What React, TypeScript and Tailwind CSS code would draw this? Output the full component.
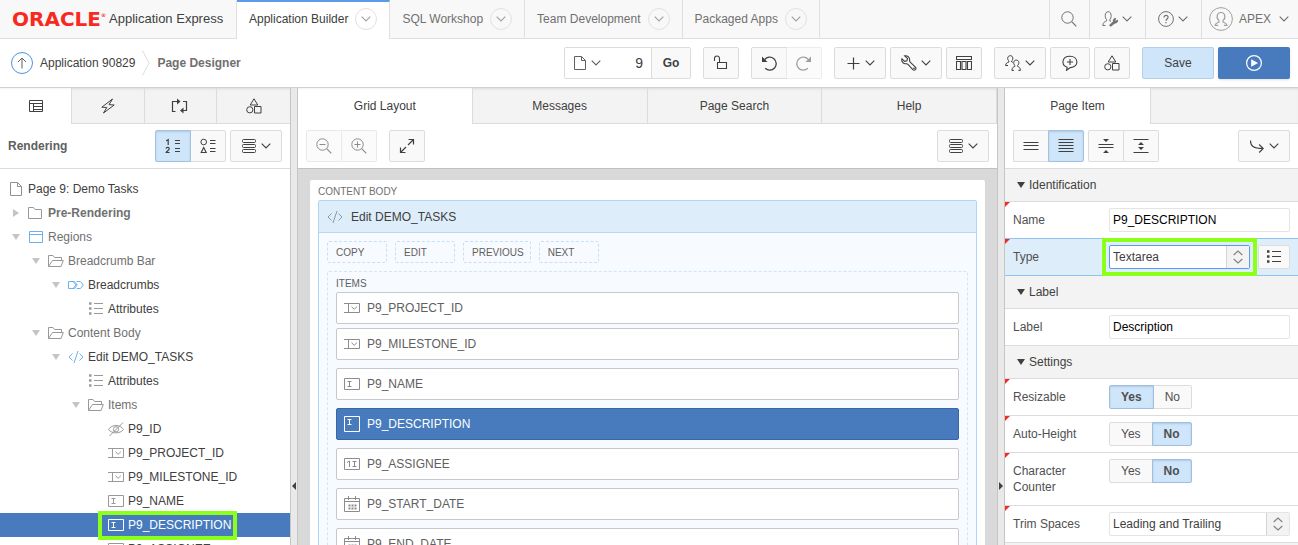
import React, { useState } from "react";

type Kids = { children?: React.ReactNode };

function Icon({ children, w = 16, h = 16, className = "" }: Kids & { w?: number; h?: number; className?: string }) {
  return (
    <svg
      width={w}
      height={h}
      viewBox={`0 0 ${w} ${h}`}
      fill="none"
      stroke="currentColor"
      strokeWidth="1"
      aria-hidden="true"
      className={`shrink-0 ${className}`}
    >
      {children}
    </svg>
  );
}

const Chevron = ({ className = "" }: { className?: string }) => (
  <Icon w={10} h={6} className={className}>
    <path d="M.7.7 5 5 9.3.7" strokeWidth="1.1" />
  </Icon>
);
const PageIcon = ({ className = "" }: { className?: string }) => (
  <Icon w={12} h={14} className={className}>
    <path d="M.5.5H7.5L11.5 4.5V13.5H.5ZM7.5.5V4.5H11.5" />
  </Icon>
);
const ShapesIcon = () => (
  <Icon>
    <path d="M8 .8 11.8 7H4.2ZM8.5 8.5h6.5v6.5h-6.5z" />
    <circle cx="3.8" cy="11.8" r="3.1" />
  </Icon>
);
const SearchIcon = ({ sign }: { sign?: "plus" | "minus" }) => (
  <Icon>
    <circle cx="6.5" cy="6.5" r="5.7" />
    <path d="M10.7 10.7 15.3 15.3" strokeWidth="1.2" />
    {sign && <path d="M3.5 6.5h6" />}
    {sign === "plus" && <path d="M6.5 3.5v6" />}
  </Icon>
);
const UserToolsIcon = () => (
  <Icon>
    <path d="M4.6 8.6C2.8 7.6 2.3.7 6.2.7s3.4 6.9 1.600 7.9v1.3l1.2.5M4.600 8.600v1.3C3 10.600 1 11.2.8 14.500h2.600" />
    <path
      d="M8.6 15.3 7.6 14.2 11.4 10.4C11 8.8 12 7.3 13.6 7.3L12.8 9.4 13.9 10.3 15.6 9.1C16 10.8 14.7 12.2 12.9 12Z"
      fill="currentColor"
    />
  </Icon>
);
const HelpIcon = () => (
  <Icon>
    <circle cx="8" cy="8" r="7.4" />
    <path d="M6 6.4C6 3.6 10.2 3.8 10.1 6.3 10 7.9 8 8 8 9.7M8 11v1.3" strokeWidth="1.2" />
  </Icon>
);
const AvatarIcon = () => (
  <Icon w={24} h={24}>
    <circle cx="12" cy="12" r="11.4" />
    <path
      d="M10 13.5C7.3 12 7.2 5.5 12 5.5s4.7 6.5 2 8v1.5c1.7.8 3.7.9 3.9 3.4h-3M10 13.5v1.5c-1.7.8-3.7.9-3.9 3.4h3"
      strokeWidth="1.2"
    />
  </Icon>
);
const LockIcon = () => (
  <Icon>
    <path d="M1.5 6V3.5a2.5 2.5 0 0 1 5 0V7.5M4.5 7.5h9v6h-9z" strokeWidth="1.1" />
  </Icon>
);
const UndoIcon = ({ className = "" }: { className?: string }) => (
  <Icon className={className}>
    <path d="M3.6 4.6A6.5 6.5 0 1 1 4.2 13.3" strokeWidth="1.3" />
    <path d="M1 1.5V7H6.5Z" fill="currentColor" stroke="none" />
  </Icon>
);
const PlusIcon = () => (
  <Icon>
    <path d="M8.5 2.5v12M2.5 8.5h12" strokeWidth="1.2" />
  </Icon>
);
const WrenchIcon = () => (
  <Icon>
    <path
      d="M3.6.9 6.5 3.4 5.9 5.7 3.6 6.4.9 3.8C.2 6.2 2.2 9.2 5.3 8.7 6 8.6 6.5 8.9 7 9.4L11.8 14.7C13.6 16.3 16 13.9 14.4 12.2L9.2 7.2C8.7 6.7 8.5 6.2 8.6 5.5 9 2.3 6.2.1 3.6.9Z"
      strokeWidth="1.1"
    />
    <circle cx="13" cy="13.3" r=".5" />
  </Icon>
);
const GridIcon = () => (
  <Icon>
    <path d="M.5 1.5h15v3H.5zM.5 6.5h4v8h-4zM6 6.5h4v8h-4zM11.5 6.5h4v8h-4z" strokeWidth="1.1" />
  </Icon>
);
const UsersIcon = () => (
  <Icon>
    <path d="M3.9 6C2.2 5 2 .7 5.3.7s3 4.3 1.3 5.3M3.9 6v1C2.3 7.6.7 8 .6 10.5h2.4M6.6 6v.8l1.2.5" />
    <path d="M9.9 10.4C8.2 9.4 8 5.1 11.3 5.1s3 4.3 1.3 5.3v1c1.6.6 2.6 1.3 2.8 4h-2M9.9 10.4v1c-1.6.6-2.9 1.300-3 4h2" />
  </Icon>
);
const CommentIcon = () => (
  <Icon>
    <path d="M5.2 12.2C-1 10.2-.6 1.3 8 1.3s9.6 10.9.3 11.3L4.5 15.3ZM8 4v6M5 7h6" strokeWidth="1.1" />
  </Icon>
);
const PlayIcon = () => (
  <Icon>
    <circle cx="8" cy="8" r="7.4" strokeWidth="1.2" />
    <path d="M5.2 4.2 12 8 5.2 11.8Z" fill="currentColor" stroke="none" />
  </Icon>
);
const RowsIcon = () => (
  <Icon>
    <rect x="1.5" y="1.5" width="13" height="3" rx="1" />
    <rect x="1.5" y="6.5" width="13" height="3" rx="1" />
    <rect x="1.5" y="11.5" width="13" height="3" rx="1" />
  </Icon>
);
const LayoutIcon = () => (
  <Icon>
    <path d="M1.5 2.5h13v11h-13zM1.5 5.5h13M5.5 5.5v8M5.5 8.500h9M5.5 11.5h9" />
  </Icon>
);
const BoltIcon = () => (
  <Icon>
    <path d="M12.5 1 1.800 9.200 6.800 9.500 3.500 15 14.200 7 9 6.600Z" />
  </Icon>
);
const ProcessIcon = () => (
  <Icon w={18}>
    <path d="M4.5 13.5h-3v-10h6M12 3.5h3.5v9h-4" strokeWidth="1.2" />
    <path d="M6 .5v6l3.5-3zM12.500 9.500v6l-3.500-3z" fill="currentColor" stroke="none" />
  </Icon>
);
const NumberedIcon = () => (
  <Icon>
    <path
      d="M1.2 3 3.2 1.6V7M1 10.6C1.3 9 4.4 9 4.2 10.8 4 12.2 1.8 13 1.2 14.5H4.600M10 2.500h5M10 5.500h5M10 10.500h5M10 13.500h5"
      strokeWidth="1.2"
    />
  </Icon>
);
const ShapeListIcon = () => (
  <Icon>
    <circle cx="3.7" cy="4" r="2.8" />
    <path d="M3.7 9.5 6.2 14.5H1.2ZM10 2.5h5.500M10 5.500h5.500M10 10.500h5.500M10 13.500h5.500" strokeWidth="1.1" />
  </Icon>
);
const ExpandIcon = () => (
  <Icon>
    <path d="M9.5 1.5h5v5M14.5 1.5 9 7M1.5 9.5v5h5M1.5 14.5 7 9" strokeWidth="1.2" />
  </Icon>
);
const LinesIcon = ({ many }: { many?: boolean }) => (
  <Icon>
    {many ? (
      <path d="M.5 1.5h15M.5 4.5h15M.5 7.5h15M.5 10.5h15M.5 13.5h15" strokeWidth="1.2" />
    ) : (
      <path d="M.5 4.5h15M.5 7.5h15M.5 11.5h15" />
    )}
  </Icon>
);
const CollapseIcon = () => (
  <Icon>
    <path d="M.5 6.5h15M.5 9.5h15" strokeWidth="1.1" />
    <path d="M5 1h6L8 4zM5 15h6L8 12z" fill="currentColor" stroke="none" />
  </Icon>
);
const ExpandAllIcon = () => (
  <Icon>
    <path d="M.5 1.5h15M.5 14.5h15" strokeWidth="1.1" />
    <path d="M5 7h6L8 4zM5 9h6L8 12z" fill="currentColor" stroke="none" />
  </Icon>
);
const GotoIcon = () => (
  <Icon>
    <path d="M1.5 2.5C1.5 8 4 10.5 14 10.5M10.2 6.5l4 4-4 4" strokeWidth="1.1" />
  </Icon>
);
const FolderIcon = () => (
  <Icon>
    <path d="M.5 13.5V2.5H5.5L7 4.5H13.5V13.5Z" />
  </Icon>
);
const FolderOpenIcon = () => (
  <Icon>
    <path d="M.5 13.5V2.5H5L6.5 4.5H13.5V7.5M.5 13.5H13L15.3 7.5H4.5L.5 13.5" />
  </Icon>
);
const RegionIcon = () => (
  <Icon className="text-[#6cb0ee]">
    <path d="M1.5 2.5h13v11h-13zM1.5 5.5h13" />
  </Icon>
);
const CrumbIcon = () => (
  <Icon className="text-[#6cb0ee]">
    <path d="M.5 4.5H6.5L9.2 8 6.5 11.5H.5ZM8.5 4.5H12.5L15.3 8 12.5 11.5H8.5M5.5 5 8 8 5.5 11" />
  </Icon>
);
const CodeIcon = ({ className = "" }: { className?: string }) => (
  <Icon className={className}>
    <path d="M4.5 4.5 1 8l3.5 3.5M11.5 4.5 15 8l-3.5 3.5M10 2 6 14" />
  </Icon>
);
const ListIcon = () => (
  <Icon>
    <path d="M6 2.5h9M6 7.5h9M6 12.5h9" />
    <path d="M1 1.2h2.5v2.5H1zM1 6.2h2.5v2.5H1zM1 11.2h2.5v2.5H1z" fill="currentColor" stroke="none" />
  </Icon>
);
const HiddenIcon = () => (
  <Icon>
    <path d="M.5 8.5C4 3.2 12 3.2 15.5 8.5 12 13 4 13 .5 8.5ZM1.5 15 15 1.5" />
    <circle cx="8" cy="8.3" r="2.6" />
  </Icon>
);
const SelectIcon = () => (
  <Icon>
    <path d="M0 3.5h15.5v9H0M4.5 3.5v9M7.5 6.7l2.7 2.6 2.7-2.6" />
  </Icon>
);
const TextIcon = () => (
  <Icon>
    <path d="M.5 2.5h15v11H.5zM3.5 5.5h4M3.5 10.5h4M5.5 5.5v5" />
  </Icon>
);
const TextareaIcon = () => (
  <Icon>
    <path d="M.5.5h15v15H.5zM3.5 3.5h4M3.5 8.5h4M5.5 3.5v5" />
  </Icon>
);
const NumberIcon = () => (
  <Icon>
    <path d="M.5 2.5h15v11H.5zM3 6.5 5.5 5V11M8.5 5.5h4M8.5 10.5h4M10.5 5.5v5" />
  </Icon>
);
const CalendarIcon = () => (
  <Icon>
    <path d="M.5 2.5h15v13H.5zM.5 5.5h15M4.5 0v4M11.5 0v4" />
    <path d="M4.5 9.5h8M4.5 12.5h8" strokeWidth="2" strokeDasharray="2 1" />
  </Icon>
);

const btn = "flex h-8 items-center justify-center gap-1 border border-[#dcdcdc] bg-[#f9f9f9] text-[#404040]";
const on = "flex h-8 items-center justify-center border border-[#a3c2e0] bg-[#cfe5fa] text-[#404040] shadow-[inset_0_1px_2px_#7fa6cc66]";

function MenuButton({ label, children }: Kids & { label: string }) {
  return (
    <button aria-label={label} className={`${btn} w-[52px] rounded-xs`}>
      {children}
      <Chevron />
    </button>
  );
}

function Header() {
  const tabs = ["Application Builder", "SQL Workshop", "Team Development", "Packaged Apps"];
  return (
    <header className="flex h-[39px] shrink-0 bg-[#f8f8f8]">
      <div className="flex w-[237px] shrink-0 items-center border-r border-b border-[#dfdfdf] pl-3">
        <span className="flex w-[97px] items-start font-['DejaVu_Sans'] text-[20px] leading-5 font-bold text-[#f8291e]">
          ORACLE<span className="text-[5px] leading-3">®</span>
        </span>
        <span className="text-[13px] whitespace-nowrap text-[#404040]">Application Express</span>
      </div>
      <nav className="flex">
        {tabs.map((t, i) => (
          <div
            key={t}
            className={
              i === 0
                ? "flex items-center gap-[7px] border-t-2 border-r border-t-[#5b9bea] border-r-[#dfdfdf] bg-white px-3 pb-[3px] text-[#404040]"
                : "flex items-center gap-[7px] border-r border-b border-[#dfdfdf] px-3 text-[#707070]"
            }
          >
            <a href="#" className="whitespace-nowrap">{t}</a>
            <button
              aria-label={`${t} menu`}
              className="flex size-[22px] items-center justify-center rounded-full border border-[#e2e2e2] text-[#a0a0a0]"
            >
              <Chevron />
            </button>
          </div>
        ))}
      </nav>
      <div className="flex flex-1 justify-end border-b border-[#dfdfdf] text-[#707070]">
        <button aria-label="Search" className="flex w-10 items-center justify-center border-l border-[#dfdfdf] pr-0.5">
          <SearchIcon />
        </button>
        <button aria-label="Administration" className="flex w-14 items-center justify-center gap-1 border-l border-[#dfdfdf] pr-0.5">
          <UserToolsIcon />
          <Chevron />
        </button>
        <button aria-label="Help" className="flex w-14 items-center justify-center gap-1 border-l border-[#dfdfdf] pr-0.5">
          <HelpIcon />
          <Chevron />
        </button>
        <button className="flex w-[97px] items-center border-l border-[#dfdfdf] pl-[7px]">
          <span className="flex text-[#a0a0a0]"><AvatarIcon /></span>
          <span className="mr-2 ml-1.5">APEX</span>
          <Chevron />
        </button>
      </div>
    </header>
  );
}

function Toolbar() {
  return (
    <div className="flex h-[49px] shrink-0 items-center border-b border-[#d0d0d0] bg-white pr-2 pl-[11px]">
      <a
        href="#"
        aria-label="Up"
        className="flex size-[22px] items-center justify-center rounded-full border border-[#4a94e6] text-[#606060]"
      >
        <Icon w={10} h={12}>
          <path d="M5 11.5V1M1 5 5 1 9 5" />
        </Icon>
      </a>
      <a href="#" className="ml-[7px] text-[#404040]">Application 90829</a>
      <Icon w={8} h={26} className="mx-[7px] text-[#dcdcdc]">
        <path d="M.5.5 7 13 .5 25.5" />
      </Icon>
      <h1 className="font-bold text-[#707070]">Page Designer</h1>
      <div className="ml-auto flex gap-3">
        <div className="flex h-8 rounded-xs border border-[#dcdcdc] text-[#404040]">
          <button aria-label="Recent pages" className="flex w-11 items-center gap-[5px] pl-[9px] text-[#606060]">
            <PageIcon />
            <Chevron />
          </button>
          <input
            aria-label="Page number"
            defaultValue="9"
            className="w-[42px] bg-white pr-2 text-right text-[14px] outline-none"
          />
          <button className="w-[39px] border-l border-[#dcdcdc] bg-[#f9f9f9] font-bold">Go</button>
        </div>
        <button aria-label="Lock" className={`${btn} w-9 rounded-xs`}><LockIcon /></button>
        <div className="flex">
          <button aria-label="Undo" className={`${btn} w-9 rounded-l-xs`}><UndoIcon /></button>
          <button aria-label="Redo" disabled className={`${btn} -ml-px w-9 rounded-r-xs border-l-0 opacity-50`}>
            <UndoIcon className="-scale-x-100" />
          </button>
        </div>
        <div className="flex gap-1">
          <MenuButton label="Create"><PlusIcon /></MenuButton>
          <MenuButton label="Utilities"><WrenchIcon /></MenuButton>
          <button aria-label="Component view" className={`${btn} w-9 rounded-xs`}><GridIcon /></button>
        </div>
        <div className="flex gap-1">
          <MenuButton label="Team"><UsersIcon /></MenuButton>
          <button aria-label="Comments" className={`${btn} w-10 rounded-xs`}><CommentIcon /></button>
          <button aria-label="Shared components" className={`${btn} w-9 rounded-xs`}><ShapesIcon /></button>
        </div>
        <div className="flex gap-1">
          <button className="h-8 w-[72px] rounded-xs border border-[#b3cfea] bg-[#cfe5fa] text-[#404040]">Save</button>
          <button
            aria-label="Save and run page"
            className="flex h-8 w-[72px] items-center justify-center rounded-xs bg-[#477bbd] text-white shadow-sm"
          >
            <PlayIcon />
          </button>
        </div>
      </div>
    </div>
  );
}

const idleTab = "border-b border-[#dcdcdc] bg-[#f3f3f3] shadow-[inset_0_3px_3px_-2px_#0000001a]";
const activeTab = "border-[#dcdcdc] bg-white shadow-[inset_0_3px_3px_-3px_#0000001a]";

type Node = {
  level: number;
  label: string;
  icon: React.ReactNode;
  tone?: string;
  open?: boolean;
  closed?: boolean;
  selected?: boolean;
};

const tree: Node[] = [
  { level: 1, label: "Pre-Rendering", icon: <FolderIcon />, tone: "font-bold text-[#707070]", closed: true },
  { level: 1, label: "Regions", icon: <RegionIcon />, tone: "text-[#707070]", open: true },
  { level: 2, label: "Breadcrumb Bar", icon: <FolderOpenIcon />, tone: "text-[#707070]", open: true },
  { level: 3, label: "Breadcrumbs", icon: <CrumbIcon />, open: true },
  { level: 4, label: "Attributes", icon: <ListIcon /> },
  { level: 2, label: "Content Body", icon: <FolderOpenIcon />, tone: "text-[#707070]", open: true },
  { level: 3, label: "Edit DEMO_TASKS", icon: <CodeIcon className="text-[#6cb0ee]" />, open: true },
  { level: 4, label: "Attributes", icon: <ListIcon /> },
  { level: 4, label: "Items", icon: <FolderOpenIcon />, tone: "text-[#707070]", open: true },
  { level: 5, label: "P9_ID", icon: <HiddenIcon /> },
  { level: 5, label: "P9_PROJECT_ID", icon: <SelectIcon /> },
  { level: 5, label: "P9_MILESTONE_ID", icon: <SelectIcon /> },
  { level: 5, label: "P9_NAME", icon: <TextIcon /> },
  { level: 5, label: "P9_DESCRIPTION", icon: <TextIcon />, selected: true },
  { level: 5, label: "P9_ASSIGNEE", icon: <NumberIcon /> },
];

const indent = ["", "pl-2", "pl-7", "pl-12", "pl-[68px]", "pl-[88px]"];

function TreePanel() {
  const tabs = [
    ["Rendering", <LayoutIcon />],
    ["Dynamic Actions", <BoltIcon />],
    ["Processing", <ProcessIcon />],
    ["Shared Components", <ShapesIcon />],
  ] as const;
  return (
    <aside className="flex w-[290px] shrink-0 flex-col overflow-hidden bg-white">
      <div className="grid h-9 shrink-0 grid-cols-[72px_1fr_1fr_1fr] text-[#404040]">
        {tabs.map(([label, icon], i) => (
          <button
            key={label}
            aria-label={label}
            className={`flex items-center justify-center border-r last:border-r-0 ${i === 0 ? activeTab : idleTab}`}
          >
            {icon}
          </button>
        ))}
      </div>
      <div className="flex h-[45px] shrink-0 items-center border-b border-[#dcdcdc] px-2">
        <h2 className="flex-1 font-bold text-[#606060]">Rendering</h2>
        <button aria-label="Order by processing" className={`${on} w-9 rounded-l-xs`}><NumberedIcon /></button>
        <button aria-label="Group by component" className={`${btn} mr-1 w-[35px] rounded-r-xs border-l-0`}>
          <ShapeListIcon />
        </button>
        <MenuButton label="Rendering menu"><RowsIcon /></MenuButton>
      </div>
      <ul className="pt-2 text-[#404040]">
        <li className="flex h-6 items-center pl-2.5">
          <PageIcon className="mr-1.5 text-[#909090]" />
          Page 9: Demo Tasks
        </li>
        {tree.map((n, i) => (
          <li
            key={i}
            className={`relative flex h-6 items-center whitespace-nowrap ${indent[n.level]} ${
              n.selected ? "bg-[#477bbd] text-white" : ""
            }`}
          >
            <span className="flex w-5 justify-start pl-1 text-[#c4c4c4]">
              {n.open && (
                <Icon w={8} h={6}><path d="M0 0h8L4 6z" fill="currentColor" stroke="none" /></Icon>
              )}
              {n.closed && (
                <Icon w={8} h={8}><path d="M1 0v8l6-4z" fill="currentColor" stroke="none" /></Icon>
              )}
            </span>
            <span className={`mr-1 flex ${n.selected ? "" : "text-[#999999]"}`}>{n.icon}</span>
            <span className={n.tone}>{n.label}</span>
            {n.selected && (
              <span className="pointer-events-none absolute -top-0.5 left-[98px] z-10 h-[29px] w-[139px] border-4 border-[#8cff1a]" />
            )}
          </li>
        ))}
      </ul>
    </aside>
  );
}

function Splitter({ side }: { side: "left" | "right" }) {
  return (
    <div className="flex w-2 shrink-0 justify-center border-x border-[#c6c6c6] bg-[#e9e9e9] pt-[394px] text-[#404040]">
      <Icon w={4} h={8}>
        <path d={side === "left" ? "M4 0v8L0 4z" : "M0 0v8l4-4z"} fill="currentColor" stroke="none" />
      </Icon>
    </div>
  );
}

function GridItem({ label, icon, selected }: { label: string; icon: React.ReactNode; selected?: boolean }) {
  return (
    <li
      className={`flex h-8 shrink-0 items-center gap-[7px] rounded-xs border pl-[7px] ${
        selected ? "border-[#3a67a0] bg-[#477bbd] text-white" : "border-[#c6cacd] bg-white text-[#606060]"
      }`}
    >
      <span className={`flex ${selected ? "" : "text-[#8c8c8c]"}`}>{icon}</span>
      {label}
    </li>
  );
}

function GridPanel() {
  return (
    <main className="flex min-w-0 flex-1 flex-col overflow-hidden bg-white">
      <div className="grid h-9 shrink-0 grid-cols-4 text-[#404040]">
        {["Grid Layout", "Messages", "Page Search", "Help"].map((t, i) => (
          <button key={t} className={`border-r ${i === 0 ? activeTab : idleTab}`}>
            {t}
          </button>
        ))}
      </div>
      <div className="flex h-[45px] shrink-0 items-center border-b border-[#c0c0c0] px-2">
        <button disabled aria-label="Zoom out" className={`${btn} w-9 rounded-l-xs opacity-60`}>
          <SearchIcon sign="minus" />
        </button>
        <button disabled aria-label="Zoom in" className={`${btn} mr-3 w-[35px] rounded-r-xs border-l-0 opacity-60`}>
          <SearchIcon sign="plus" />
        </button>
        <button aria-label="Expand" className={`${btn} mr-auto w-9 rounded-xs`}><ExpandIcon /></button>
        <MenuButton label="Layout menu"><RowsIcon /></MenuButton>
      </div>
      <div className="flex-1 overflow-hidden bg-[#d9d9d9] px-3 pt-[11px]">
        <section className="rounded-xs bg-white px-2 pb-2">
          <h2 className="h-5 pt-0.5 text-[10px] leading-5 text-[#707070]">CONTENT BODY</h2>
          <div className="rounded-xs border border-[#aed5f7] bg-[#f7fbff]">
            <h3 className="flex h-8 items-center gap-2 border-b border-[#b9d8f0] bg-[#deedfa] pl-2 text-[#404040]">
              <CodeIcon className="text-[#8c9aa5]" />
              Edit DEMO_TASKS
            </h3>
            <div className="px-2 pt-2 pb-2">
              <div className="mb-2 flex gap-2">
                {["COPY", "EDIT", "PREVIOUS", "NEXT"].map((b) => (
                  <div
                    key={b}
                    className="flex h-[22px] min-w-[60px] items-center rounded-xs border border-dashed border-[#c5e0f7] pt-0.5 pr-1.5 pl-2 text-[10px] text-[#606060]"
                  >
                    {b}
                  </div>
                ))}
              </div>
              <div className="rounded-xs border border-dashed border-[#cfe5f8] px-2 pb-2">
                <h4 className="h-5 pt-0.5 text-[10px] leading-5 text-[#606060]">ITEMS</h4>
                <ul className="flex flex-col gap-2">
                  <li>
                    <ul className="flex flex-col gap-1">
                      <GridItem label="P9_PROJECT_ID" icon={<SelectIcon />} />
                      <GridItem label="P9_MILESTONE_ID" icon={<SelectIcon />} />
                    </ul>
                  </li>
                  <GridItem label="P9_NAME" icon={<TextIcon />} />
                  <GridItem label="P9_DESCRIPTION" icon={<TextareaIcon />} selected />
                  <GridItem label="P9_ASSIGNEE" icon={<NumberIcon />} />
                  <GridItem label="P9_START_DATE" icon={<CalendarIcon />} />
                  <GridItem label="P9_END_DATE" icon={<CalendarIcon />} />
                </ul>
              </div>
            </div>
          </div>
        </section>
      </div>
    </main>
  );
}

function Section({ title }: { title: string }) {
  return (
    <h2 className="flex h-[33px] items-center gap-1 border-b border-[#dcdcdc] bg-[#f3f3f3] pl-3 text-[#404040]">
      <Icon w={8} h={6}><path d="M0 0h8L4 6z" fill="currentColor" stroke="none" /></Icon>
      {title}
    </h2>
  );
}

function Field({
  label,
  htmlFor,
  required,
  tone = "border-[#dcdcdc]",
  children,
}: Kids & { label: string; htmlFor: string; required?: boolean; tone?: string }) {
  return (
    <div className={`relative flex items-start border-b px-2 py-1.5 ${tone}`}>
      {required && (
        <Icon w={5} h={5} className="absolute top-0 left-0 text-[#f8291e]">
          <path d="M0 0h5L0 5z" fill="currentColor" stroke="none" />
        </Icon>
      )}
      <label id={`${htmlFor}-label`} htmlFor={htmlFor} className="w-24 shrink-0 py-1 pr-4 leading-4 text-[#505050]">
        {label}
      </label>
      <div className="flex min-w-0 flex-1">{children}</div>
    </div>
  );
}

const textBox = "h-6 w-full min-w-0 rounded-xs border border-[#e4e4e4] bg-white px-[3px] text-black outline-none";

function Select({ id, value, tone }: { id: string; value: string; tone: string }) {
  return (
    <div className={`flex h-6 min-w-0 flex-1 rounded-xs border bg-white ${tone}`}>
      <select id={id} className="min-w-0 flex-1 appearance-none bg-transparent px-[3px] text-[#404040] outline-none">
        <option>{value}</option>
      </select>
      <span className="flex w-[23px] items-center justify-center border-l border-[#d4d4d4] bg-[#f3f3f3] text-[#808080]">
        <Icon w={10} h={14}>
          <path d="M.7 5 5 1 9.3 5M.7 9 5 13 9.3 9" strokeWidth="1.1" />
        </Icon>
      </span>
    </div>
  );
}

function YesNo({ id, initial }: { id: string; initial: "Yes" | "No" }) {
  const [value, setValue] = useState<string>(initial);
  return (
    <div role="radiogroup" aria-labelledby={`${id}-label`} className="relative flex">
      {["Yes", "No"].map((o, i) => (
        <label
          key={o}
          className={`flex h-6 items-center border px-[11px] ${i === 0 ? "rounded-l-xs" : "-ml-px rounded-r-xs"} ${
            value === o
              ? "z-10 border-[#9fbfdf] bg-[#cfe5fa] font-bold text-[#505050] shadow-[inset_0_1px_2px_#7fa6cc66]"
              : "border-[#dcdcdc] bg-[#f9f9f9] text-[#505050]"
          }`}
        >
          <input
            type="radio"
            id={i === 0 ? id : `${id}-no`}
            name={id}
            value={o}
            checked={value === o}
            onChange={() => setValue(o)}
            className="sr-only"
          />
          {o}
        </label>
      ))}
    </div>
  );
}

function PropertyPanel() {
  return (
    <aside className="flex w-[293px] shrink-0 flex-col overflow-hidden bg-white">
      <div className="flex h-9 shrink-0 text-[#404040]">
        <button className={`w-[145px] ${activeTab}`}>Page Item</button>
        <div className={`flex-1 border-l ${idleTab}`} />
      </div>
      <div className="flex h-[45px] shrink-0 items-center border-b border-[#dcdcdc] px-2">
        <button aria-label="Show common" className={`${btn} w-[35px] rounded-l-xs border-r-0`}><LinesIcon /></button>
        <button aria-label="Show all" className={`${on} mr-1 w-9 rounded-r-xs`}><LinesIcon many /></button>
        <button aria-label="Collapse all" className={`${btn} w-9 rounded-l-xs`}><CollapseIcon /></button>
        <button aria-label="Expand all" className={`${btn} mr-auto w-[35px] rounded-r-xs border-l-0`}>
          <ExpandAllIcon />
        </button>
        <MenuButton label="Go to group"><GotoIcon /></MenuButton>
      </div>
      <Section title="Identification" />
      <Field label="Name" htmlFor="name" required tone="border-[#8fc4f2]">
        <input id="name" defaultValue="P9_DESCRIPTION" className={textBox} />
      </Field>
      <Field label="Type" htmlFor="type" required tone="border-[#8fc4f2] bg-[#deedfa]">
        <div className="relative flex flex-1 gap-2">
          <Select id="type" value="Textarea" tone="border-[#5b9bea]" />
          <button
            aria-label="Choose type"
            className="flex h-6 w-8 items-center justify-center rounded-xs border border-[#dcdcdc] bg-[#f9f9f9] text-[#404040]"
          >
            <ListIcon />
          </button>
          <span className="pointer-events-none absolute -top-[7px] right-[33px] -left-[7px] h-[38px] border-4 border-[#8cff1a]" />
        </div>
      </Field>
      <Section title="Label" />
      <Field label="Label" htmlFor="label">
        <input id="label" defaultValue="Description" className={textBox} />
      </Field>
      <Section title="Settings" />
      <Field label="Resizable" htmlFor="resizable" required>
        <YesNo id="resizable" initial="Yes" />
      </Field>
      <Field label="Auto-Height" htmlFor="autoheight" required>
        <YesNo id="autoheight" initial="No" />
      </Field>
      <Field label="Character Counter" htmlFor="counter" required>
        <YesNo id="counter" initial="No" />
      </Field>
      <Field label="Trim Spaces" htmlFor="trim" required>
        <Select id="trim" value="Leading and Trailing" tone="border-[#e4e4e4]" />
      </Field>
      <div className="flex-1 bg-[#f3f3f3]" />
    </aside>
  );
}

export default function App() {
  return (
    <div className="flex h-screen flex-col overflow-hidden bg-white font-['Liberation_Sans',Arial,sans-serif] text-[12px] leading-4">
      <Header />
      <Toolbar />
      <div className="flex min-h-0 flex-1">
        <TreePanel />
        <Splitter side="left" />
        <GridPanel />
        <Splitter side="right" />
        <PropertyPanel />
      </div>
    </div>
  );
}
